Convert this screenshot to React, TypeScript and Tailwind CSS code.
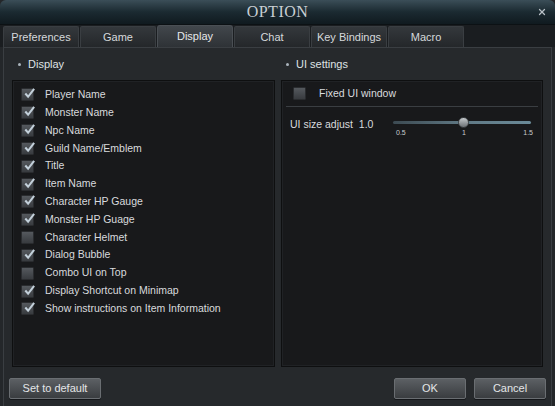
import { X } from "lucide-react";

const tabs = ["Preferences", "Game", "Display", "Chat", "Key Bindings", "Macro"];

const options = [
  { label: "Player Name", on: true },
  { label: "Monster Name", on: true },
  { label: "Npc Name", on: true },
  { label: "Guild Name/Emblem", on: true },
  { label: "Title", on: true },
  { label: "Item Name", on: true },
  { label: "Character HP Gauge", on: true },
  { label: "Monster HP Guage", on: true },
  { label: "Character Helmet", on: false },
  { label: "Dialog Bubble", on: true },
  { label: "Combo UI on Top", on: false },
  { label: "Display Shortcut on Minimap", on: true },
  { label: "Show instructions on Item Information", on: true },
];

const Check = ({ on }: { on: boolean }) => (
  <div className="relative w-[13px] h-[13px] shrink-0 rounded-[1px] bg-gradient-to-b from-[#55595e] to-[#383b3f] border border-[#2a2c2f]">
    {on && (
      <svg viewBox="0 0 14 14" className="absolute left-[1px] -top-[2px] w-[13px] h-[13px]">
        <path d="M2.5 7 L5.5 10.5 L12 2" fill="none" stroke="#c3d0da" strokeWidth="2.2" />
      </svg>
    )}
  </div>
);

const Btn = ({ label, w }: { label: string; w: string }) => (
  <button
    className={`${w} h-[21px] text-[11px] text-[#e4e6e8] rounded-[2px] border border-[#6a6e72] bg-gradient-to-b from-[#5c6064] to-[#3a3d40] shadow-[0_1px_0_#15171a]`}
  >
    {label}
  </button>
);

const SectionHead = ({ label, pad }: { label: string; pad: string }) => (
  <div className={`flex items-center gap-[7px] h-[32px] ${pad} text-[11px] text-[#dfe2e5]`}>
    <span className="w-[3px] h-[3px] rounded-full bg-[#aab4bc]" />
    {label}
  </div>
);

export default function App() {
  return (
    <div
      className="w-[555px] h-[406px] bg-[#24272a] flex flex-col overflow-hidden select-none"
      style={{ fontFamily: '"Liberation Sans", Arial, sans-serif' }}
    >
      {/* title bar */}
      <div className="relative h-[25px] shrink-0 flex items-center justify-center bg-gradient-to-b from-[#3b4e58] via-[#1b2a31] to-[#101a1f] border-b border-[#0c1114] rounded-t-[6px]">
        <span
          className="text-[16px] tracking-[0.5px] text-[#c9cfd4]"
          style={{ fontFamily: '"Liberation Serif", "Times New Roman", serif' }}
        >
          OPTION
        </span>
        <X size={10} strokeWidth={3} className="absolute right-[8px] top-[7px] text-[#b8c0c6]" />
      </div>

      {/* tabs */}
      <div className="flex h-[22px] shrink-0 pl-[3px] pt-[1px] gap-[1px] bg-[#1a1d20]">
        {tabs.map((t) => {
          const active = t === "Display";
          return (
            <div
              key={t}
              className={
                active
                  ? "w-[76px] -mt-[1px] flex items-center justify-center text-[11px] text-[#e6e8ea] rounded-t-[3px] border border-b-0 border-[#4a4f54] bg-gradient-to-b from-[#42474c] to-[#2e3236]"
                  : "w-[76px] flex items-center justify-center text-[11px] text-[#d6d9dc] rounded-t-[2px] border border-b-0 border-[#3a3e42] bg-gradient-to-b from-[#34383c] to-[#24272a]"
              }
            >
              {t}
            </div>
          );
        })}
      </div>

      {/* body */}
      <div className="flex-1 mx-[3px] flex flex-col bg-[#26292c] border border-[#3a3e42] border-b-0">
        <div className="flex flex-1 px-[8px] gap-[6px]">
          <div className="flex flex-col w-[263px]">
            <SectionHead label="Display" pad="pl-[6px]" />
            <div className="h-[287px] bg-[#18191b] border border-[#0e0f10] shadow-[inset_0_0_0_1px_#202225] pt-[5px]">
              {options.map((o) => (
                <div key={o.label} className="flex items-center h-[17.83px] pl-[8px] gap-[11px]">
                  <Check on={o.on} />
                  <span className="text-[10.5px] text-[#d8dbde] whitespace-nowrap">{o.label}</span>
                </div>
              ))}
            </div>
          </div>
          <div className="flex flex-col flex-1">
            <SectionHead label="UI settings" pad="pl-[5px]" />
            <div className="h-[287px] bg-[#18191b] border border-[#0e0f10] shadow-[inset_0_0_0_1px_#202225] px-[4px]">
              <div className="flex items-center h-[26px] pl-[7px] gap-[13px] border-b border-[#3a3e42]">
                <Check on={false} />
                <span className="text-[10.5px] text-[#d8dbde]">Fixed UI window</span>
              </div>
              <div className="flex items-start pt-[10px] pl-[4px]">
                <span className="text-[10.5px] text-[#d8dbde] w-[103px] whitespace-nowrap">UI size adjust&nbsp;&nbsp;1.0</span>
                <div className="relative w-[138px] h-[22px]">
                  <div className="absolute left-0 right-0 top-[4px] h-[3px] rounded-full bg-gradient-to-r from-[#3c4a52] via-[#5f7884] to-[#6a8a98]" />
                  <div className="absolute left-[65px] top-0 w-[11px] h-[11px] rounded-full bg-gradient-to-b from-[#c5cacd] to-[#6d7276] border border-[#3b3f42]" />
                  <span className="absolute left-[3px] top-[11px] text-[7px] text-[#c8cdd1]">0.5</span>
                  <span className="absolute left-[69px] top-[11px] text-[7px] text-[#c8cdd1]">1</span>
                  <span className="absolute -right-[2px] top-[11px] text-[7px] text-[#c8cdd1]">1.5</span>
                </div>
              </div>
            </div>
          </div>
        </div>
        <div className="flex items-center h-[38px] px-[5px] pt-[3px]">
          <Btn label="Set to default" w="w-[92px]" />
          <div className="flex-1" />
          <div className="flex gap-[8px]">
            <Btn label="OK" w="w-[72px]" />
            <Btn label="Cancel" w="w-[72px]" />
          </div>
        </div>
      </div>
    </div>
  );
}
